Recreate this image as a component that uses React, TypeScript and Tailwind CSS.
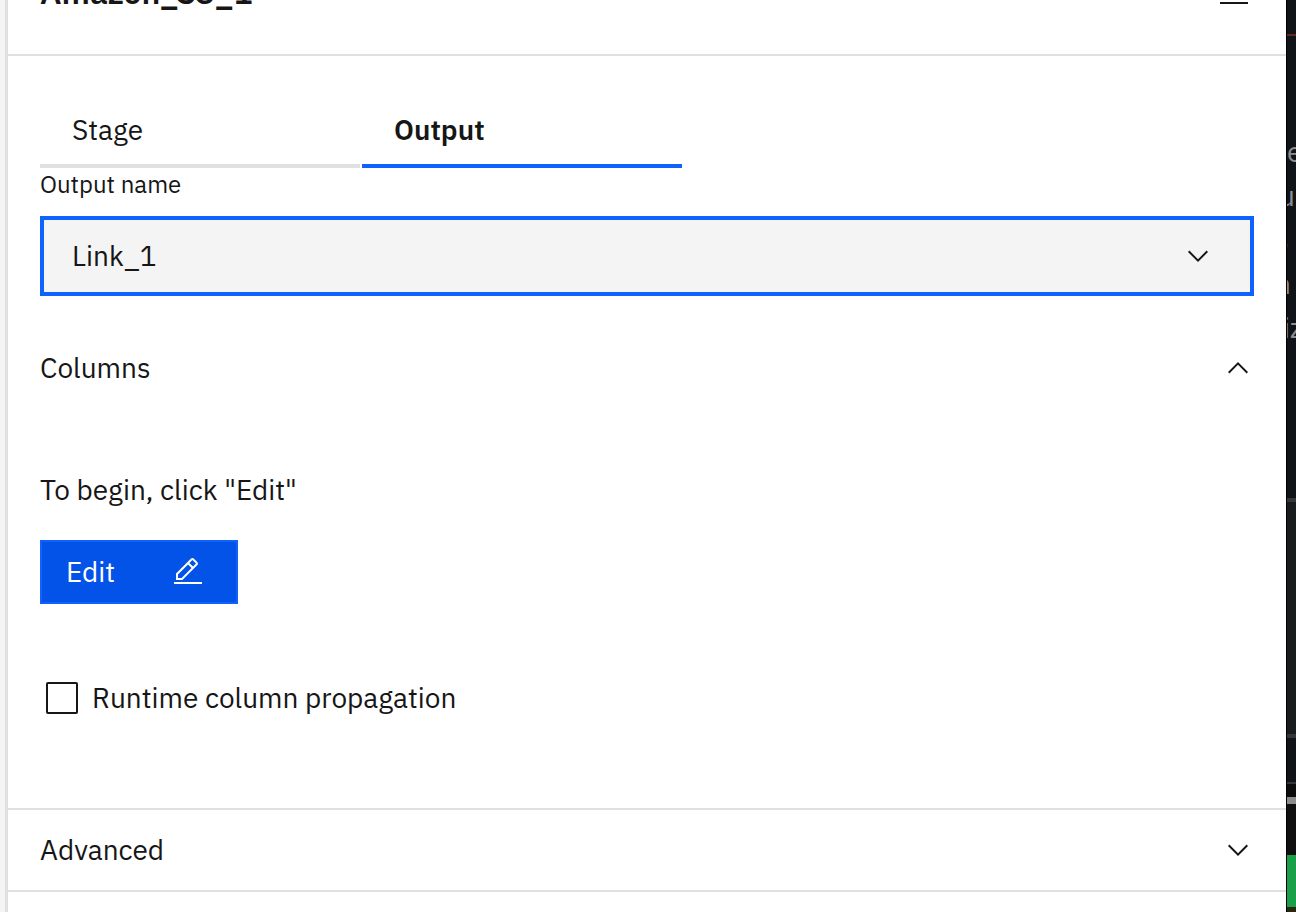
import { useState } from "react";

function Chevron({ up = false }: { up?: boolean }) {
  return (
    <svg aria-hidden="true" viewBox="0 0 16 16" className="size-8 shrink-0" fill="currentColor">
      {up ? (
        <path d="M8 5 13 10 12.3 10.7 8 6.4 3.7 10.7 3 10z" />
      ) : (
        <path d="M8 11 3 6 3.7 5.3 8 9.6 12.3 5.3 13 6z" />
      )}
    </svg>
  );
}

function EditIcon() {
  return (
    <svg aria-hidden="true" viewBox="0 0 32 32" className="size-8 shrink-0" fill="currentColor">
      <path d="M2 26H30V28H2z" />
      <path d="M25.4 9c.8-.8.8-2 0-2.8l-3.6-3.6c-.8-.8-2-.8-2.8 0l-15 15V24h6.4L25.4 9zM20.4 4 24 7.6l-3 3L17.4 7l3-3zM6 22v-3.6l10-10 3.6 3.6-10 10H6z" />
    </svg>
  );
}

function Header() {
  return (
    <header className="-mt-[70px] flex h-[126px] items-center justify-between border-b-2 border-[#e0e0e0] pr-9 pl-8">
      <h1 className="text-[32px] leading-10 font-semibold">Amazon_S3_1</h1>
      <button type="button" aria-label="Menu">
        <svg aria-hidden="true" viewBox="0 0 32 32" className="size-8" fill="currentColor">
          <path d="M2 6H30V8H2zM2 12H30V14H2zM2 18H30V20H2zM2 26H30V28H2z" />
        </svg>
      </button>
    </header>
  );
}

function Tabs() {
  const [active, setActive] = useState("Output");
  return (
    <div role="tablist" className="flex gap-0.5">
      {["Stage", "Output"].map((name) => (
        <button
          key={name}
          type="button"
          role="tab"
          aria-selected={active === name}
          onClick={() => setActive(name)}
          className={
            active === name
              ? "h-18 w-80 border-b-4 border-[#0f62fe] px-8 text-left font-semibold"
              : "h-18 w-80 border-b-4 border-[#e0e0e0] px-8 text-left"
          }
        >
          {name}
        </button>
      ))}
    </div>
  );
}

function Backdrop() {
  return (
    <aside
      aria-hidden="true"
      className="flex w-2.5 shrink-0 flex-col overflow-hidden border-l border-black bg-[#101419] text-[28px] leading-11 text-[#8d8d8f]"
    >
      <div className="mt-[34px] h-0.5 shrink-0 bg-[#5c2a20]" />
      <div className="flex h-[462px] shrink-0 flex-col pt-[94px]">
        <span>e</span>
        <span className="-ml-2">u</span>
        <span className="-ml-3">s</span>
        <span className="-ml-3">n</span>
        <span className="-ml-1">iz</span>
      </div>
      <div className="h-60 shrink-0 border-y-4 border-[#35373a] bg-[#191b1d]" />
      <div className="h-[46px] shrink-0 border-b-2 border-[#35373a]" />
      <div className="h-[13px] shrink-0 bg-[#0c0c0c]" />
      <div className="h-[7px] shrink-0 bg-[#8c8c8c]" />
      <div className="h-[51px] shrink-0 bg-[#101010]" />
      <div className="h-[52px] shrink-0 bg-[#1a9f4b]" />
      <div className="grow bg-[#27290f]" />
    </aside>
  );
}

export default function App() {
  const [link, setLink] = useState("Link_1");
  const [propagate, setPropagate] = useState(false);
  return (
    <div className="flex h-screen overflow-hidden bg-[#f4f4f4] font-['IBM_Plex_Sans','Noto_Sans',sans-serif] text-[28px] leading-10 text-[#161616]">
      <main className="ml-[5px] flex min-w-0 grow flex-col border-l-3 border-[#e0e0e0] bg-white">
        <Header />
        <div className="px-8 pt-10">
          <Tabs />
          <label htmlFor="output-name" className="mb-4 block text-[24px] leading-8">
            Output name
          </label>
          <div className="grid items-center">
            <select
              id="output-name"
              value={link}
              onChange={(e) => setLink(e.target.value)}
              className="col-start-1 row-start-1 h-20 w-full appearance-none border-4 border-[#0f62fe] bg-[#f4f4f4] px-7 outline-none"
            >
              <option>Link_1</option>
            </select>
            <span className="pointer-events-none col-start-1 row-start-1 mr-10 justify-self-end">
              <Chevron />
            </span>
          </div>
        </div>
        <section className="px-8 pt-8">
          <button type="button" aria-expanded="true" className="flex h-20 w-full items-center justify-between">
            Columns
            <Chevron up />
          </button>
          <p className="mt-[62px]">To begin, click "Edit"</p>
          <button
            type="button"
            className="mt-[30px] flex h-16 w-[198px] items-center justify-between border-2 border-[#0f62fe] bg-[#0353e9] pr-8 pl-6 text-white"
          >
            Edit
            <EditIcon />
          </button>
          <label className="mt-[74px] flex items-center gap-3.5 pl-1.5">
            <input
              type="checkbox"
              checked={propagate}
              onChange={(e) => setPropagate(e.target.checked)}
              className="size-8 appearance-none rounded-xs border-2 border-[#161616] checked:bg-[#161616]"
            />
            Runtime column propagation
          </label>
        </section>
        <section className="mt-[90px] border-y-2 border-[#e0e0e0] px-8">
          <button type="button" aria-expanded="false" className="flex h-20 w-full items-center justify-between">
            Advanced
            <Chevron />
          </button>
        </section>
      </main>
      <Backdrop />
    </div>
  );
}
